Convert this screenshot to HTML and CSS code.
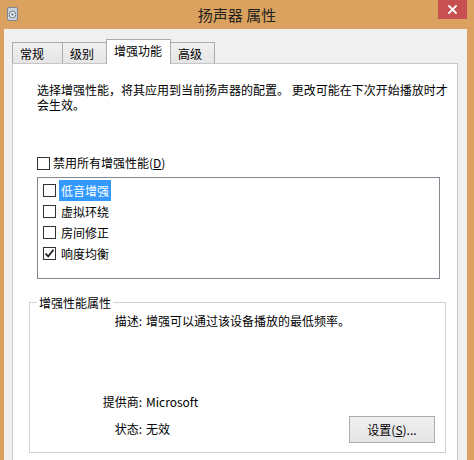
FILE: index.html
```html
<!DOCTYPE html>
<html lang="zh-CN">
<head>
    <meta charset="UTF-8">
    <title>扬声器 属性</title>
    <link rel="stylesheet" href="styles.css">
</head>
<body>
    <div class="titlebar">
        <div class="app-icon">
            <svg width="11" height="14" viewBox="0 0 11 14">
                <rect x="0.5" y="0.5" width="10" height="13" rx="1.5" fill="#c9d2dc" stroke="#7a8894"/>
                <circle cx="5.5" cy="7.5" r="3.3" fill="#eef2f6" stroke="#6c7c8c"/>
                <circle cx="5.5" cy="7.5" r="1.2" fill="#6c7c8c"/>
            </svg>
        </div>
        <div class="title">扬声器 属性</div>
        <div class="close-btn">
            <svg width="9" height="9" viewBox="0 0 9 9">
                <path d="M1 1 L8 8 M8 1 L1 8" stroke="#fff" stroke-width="1.8" stroke-linecap="square"/>
            </svg>
        </div>
    </div>

    <div class="client">
        <!-- Pestañas -->
        <div class="tabs">
            <div class="tab t1">常规</div>
            <div class="tab t2">级别</div>
            <div class="tab active">增强功能</div>
            <div class="tab t4">高级</div>
        </div>

        <div class="panel">
            <p class="intro">选择增强性能，将其应用到当前扬声器的配置。 更改可能在下次开始播放时才会生效。</p>

            <div class="check-row">
                <span class="box"></span>
                <span>禁用所有增强性能(<u>D</u>)</span>
            </div>

            <div class="listbox">
                <div class="item">
                    <span class="box"></span>
                    <span class="label selected">低音增强</span>
                </div>
                <div class="item">
                    <span class="box"></span>
                    <span class="label">虚拟环绕</span>
                </div>
                <div class="item">
                    <span class="box"></span>
                    <span class="label">房间修正</span>
                </div>
                <div class="item">
                    <span class="box checked">
                        <svg width="11" height="11" viewBox="0 0 11 11">
                            <path d="M1.5 5.5 L4.2 8.4 L9.5 1.8" fill="none" stroke="#222" stroke-width="1.8"/>
                        </svg>
                    </span>
                    <span class="label">响度均衡</span>
                </div>
            </div>

            <fieldset class="group">
                <legend>增强性能属性</legend>
                <div class="props">
                    <span class="key r1">描述:</span>
                    <span class="val r1 wide">增强可以通过该设备播放的最低频率。</span>

                    <span class="key r2">提供商:</span>
                    <span class="val r2">Microsoft</span>

                    <span class="key r3">状态:</span>
                    <span class="val r3">无效</span>
                    <button class="btn">设置(<u>S</u>)...</button>
                </div>
            </fieldset>
        </div>
    </div>
</body>
</html>
```

FILE: styles.css
```css
/* Ventana general */
body {
    margin: 0;
    width: 474px;
    height: 460px;
    overflow: hidden;
    background-color: #daa25e;
    font-family: "Noto Sans CJK SC", "Microsoft YaHei", sans-serif;
    font-size: 12px;
    color: #000;
}

.titlebar {
    height: 29px;
    display: grid;
    grid-template-columns: 1fr auto 1fr;
    align-items: start;
}

.app-icon {
    padding: 7px 0 0 7px;
}

.app-icon svg {
    display: block;
}

.title {
    font-size: 15px;
    line-height: 29px;
    color: #222;
}

.close-btn {
    justify-self: end;
    margin-right: 7px;
    width: 29px;
    height: 19px;
    background-color: #c75050;
    display: flex;
    align-items: center;
    justify-content: center;
}

.close-btn svg {
    display: block;
}

/* Zona cliente */
.client {
    margin: 0 7px 0 4px;
    height: 431px;
    background-color: #f0f0f0;
    padding: 10px 9px 0 8px;
    box-sizing: border-box;
}

.tabs {
    display: flex;
    align-items: flex-end;
    height: 24px;
    position: relative;
    z-index: 1;
}

.tab {
    height: 21px;
    box-sizing: border-box;
    border: 1px solid #acacac;
    border-bottom: none;
    background: linear-gradient(#f0f0f0, #e5e5e5);
    padding-left: 7px;
    line-height: 21px;
}

.t1 { width: 51px; }
.t2 { width: 46px; margin-left: -1px; }
.t4 { width: 45px; margin-left: -1px; }

.tab.active {
    width: 65px;
    height: 25px;
    margin-left: -2px;
    margin-bottom: -1px;
    background: #fff;
    line-height: 21px;
    padding-left: 7px;
    z-index: 2;
}

.panel {
    background-color: #fff;
    border: 1px solid #c6c6c6;
    height: 420px;
    padding: 18px 0 0 24px;
    box-sizing: border-box;
}

.intro {
    margin: 0;
    line-height: 15px;
    width: 416px;
}

.check-row {
    margin-top: 43px;
    height: 16px;
    display: flex;
    align-items: center;
    gap: 3px;
    line-height: 16px;
}

.box {
    width: 13px;
    height: 13px;
    box-sizing: border-box;
    border: 1px solid #333;
    background: #fff;
    flex: none;
    display: flex;
    align-items: center;
    justify-content: center;
}

.box svg {
    display: block;
}

/* Lista */
.listbox {
    margin-top: 6px;
    width: 403px;
    height: 102px;
    box-sizing: border-box;
    border: 1px solid #828790;
    padding: 2px 0 0 5px;
}

.item {
    height: 21px;
    display: flex;
    align-items: center;
    gap: 3px;
}

.label {
    line-height: 21px;
    padding: 0 2px;
}

.label.selected {
    background-color: #3399ff;
    color: #fff;
}

/* Grupo de propiedades */
.group {
    margin: 16px 0 0 -8px;
    padding: 0 10px 9px 0;
    width: 417px;
    min-width: 0;
    box-sizing: border-box;
    border: 1px solid #d0d0d0;
}

.group legend {
    margin-left: 7px;
    padding: 0 2px;
    line-height: 15px;
}

.props {
    display: grid;
    grid-template-columns: 112px 1fr auto;
    column-gap: 4px;
    margin-top: 3px;
    line-height: 15px;
}

.key {
    grid-column: 1;
    text-align: right;
}

.val {
    grid-column: 2;
}

.val.wide {
    grid-column: 2 / 4;
}

.r1 { grid-row: 1; }

.r2 {
    grid-row: 2;
    margin-top: 66px;
}

.r3 {
    grid-row: 3;
    align-self: center;
    padding-top: 5px;
}

.btn {
    grid-column: 3;
    grid-row: 3;
    margin-top: 7px;
    width: 86px;
    height: 27px;
    border: 1px solid #acacac;
    background: linear-gradient(#f0f0f0, #e5e5e5);
    font-family: inherit;
    font-size: 12px;
    color: #000;
    padding: 0;
}
```
